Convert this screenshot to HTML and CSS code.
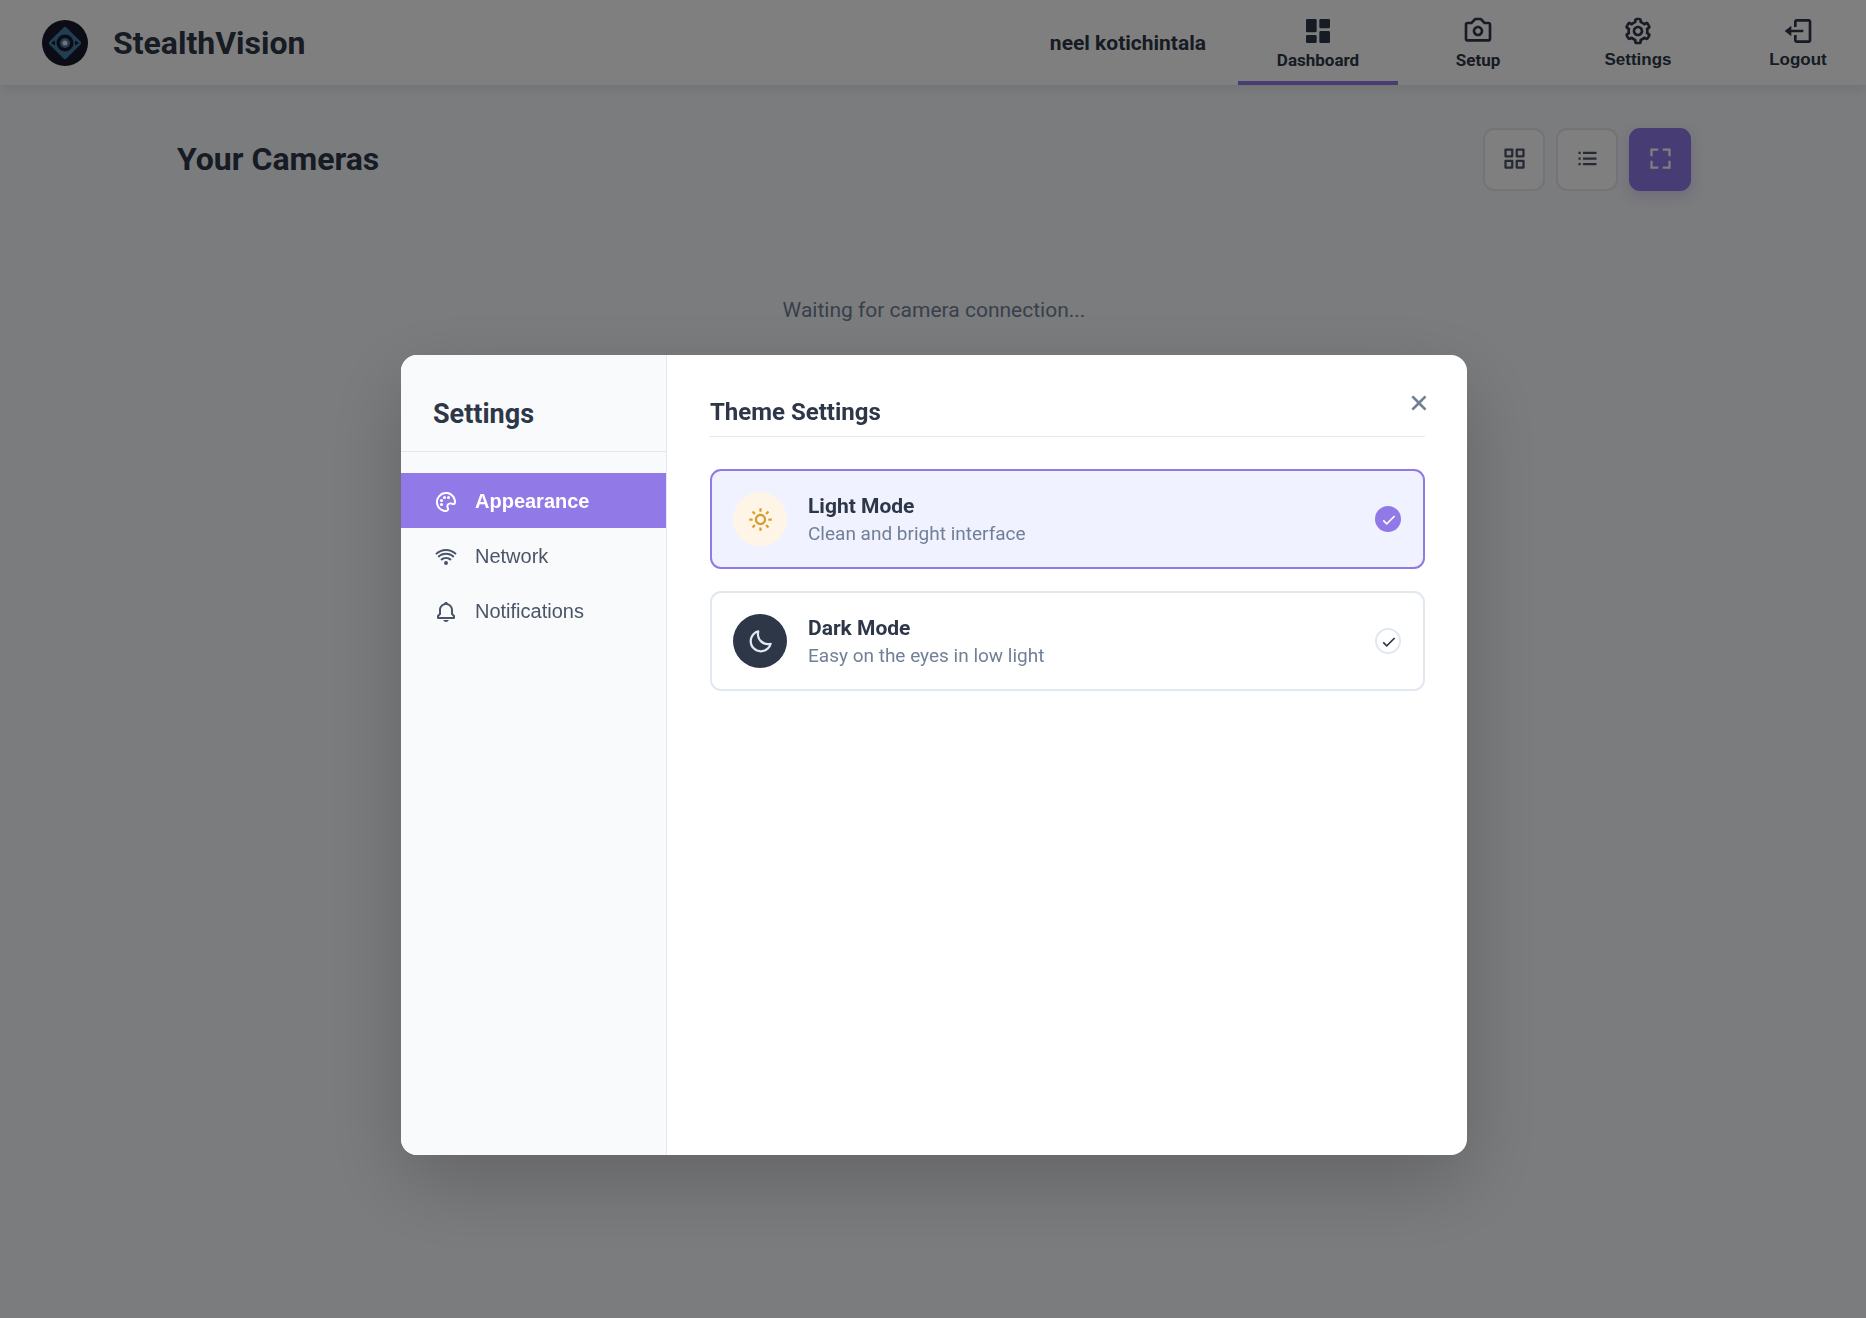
FILE: index.html
```html
<!DOCTYPE html>
<html lang="en">
<head>
<meta charset="utf-8">
<meta name="viewport" content="width=device-width, initial-scale=1">
<title>StealthVision</title>
<link rel="stylesheet" href="styles.css">
</head>
<body>
<header class="navbar">
  <a class="brand" href="#">
    <svg class="brand-logo" viewBox="0 0 46 46" aria-hidden="true">
      <circle cx="23" cy="23" r="23" fill="#16192c"/>
      <rect x="11" y="11" width="24" height="24" rx="2" fill="#447ca6" transform="rotate(45 23 23)"/>
      <circle cx="23" cy="23" r="8.500" fill="#16192c"/>
      <circle cx="23" cy="23" r="5" fill="#447ca6"/>
      <circle cx="23" cy="23" r="2.500" fill="#e6e6e0"/>
      <path d="M9 23l4-2.500v5zM37 23l-4-2.500v5z" fill="#16192c"/>
    </svg>
    <span class="brand-name">StealthVision</span>
  </a>
  <nav class="nav-menu" aria-label="Main">
    <span class="user-name">neel kotichintala</span>
    <a class="nav-item active" href="#" aria-current="page">
      <svg class="icon nav-icon" viewBox="0 0 24 24"><path d="M4 13h6a1 1 0 0 0 1-1V4a1 1 0 0 0-1-1H4a1 1 0 0 0-1 1v8a1 1 0 0 0 1 1zm-1 7a1 1 0 0 0 1 1h6a1 1 0 0 0 1-1v-4a1 1 0 0 0-1-1H4a1 1 0 0 0-1 1v4zm10 0a1 1 0 0 0 1 1h6a1 1 0 0 0 1-1v-7a1 1 0 0 0-1-1h-6a1 1 0 0 0-1 1v7zm1-10h6a1 1 0 0 0 1-1V4a1 1 0 0 0-1-1h-6a1 1 0 0 0-1 1v5a1 1 0 0 0 1 1z"/></svg>
      <span>Dashboard</span>
    </a>
    <a class="nav-item" href="#">
      <svg class="icon nav-icon" viewBox="0 0 24 24"><path fill-rule="evenodd" d="M12 8c-2.168 0-4 1.832-4 4s1.832 4 4 4 4-1.832 4-4-1.832-4-4-4zm0 6c-1.065 0-2-.935-2-2s.935-2 2-2 2 .935 2 2-.935 2-2 2z M20 5h-2.586l-2.707-2.707A.996.996 0 0 0 14 2h-4a.996.996 0 0 0-.707.293L6.586 5H4c-1.103 0-2 .897-2 2v11c0 1.103.897 2 2 2h16c1.103 0 2-.897 2-2V7c0-1.103-.897-2-2-2zM4 18V7h3c.266 0 .52-.105.707-.293L10.414 4h3.172l2.707 2.707A.996.996 0 0 0 17 7h3l.002 11H4z"/></svg>
      <span>Setup</span>
    </a>
    <button class="nav-item" type="button">
      <svg class="icon nav-icon" viewBox="0 0 24 24"><path d="M12 16c2.206 0 4-1.794 4-4s-1.794-4-4-4-4 1.794-4 4 1.794 4 4 4zm0-6c1.084 0 2 .916 2 2s-.916 2-2 2-2-.916-2-2 .916-2 2-2z"/><path d="m2.845 16.136 1 1.730c.531.917 1.809 1.261 2.730.730l.529-.306A8.100 8.100 0 0 0 9 19.402V20c0 1.103.897 2 2 2h2c1.103 0 2-.897 2-2v-.598a8.132 8.132 0 0 0 1.896-1.111l.529.306c.923.530 2.198.188 2.731-.731l.999-1.729a2.001 2.001 0 0 0-.731-2.732l-.505-.292a7.718 7.718 0 0 0 0-2.224l.505-.292a2.002 2.002 0 0 0 .731-2.732l-.999-1.729c-.531-.920-1.808-1.265-2.731-.732l-.529.306A8.100 8.100 0 0 0 15 4.598V4c0-1.103-.897-2-2-2h-2c-1.103 0-2 .897-2 2v.598a8.132 8.132 0 0 0-1.896 1.111l-.529-.306c-.924-.531-2.200-.187-2.731.732l-.999 1.729a2.001 2.001 0 0 0 .731 2.732l.505.292a7.683 7.683 0 0 0 0 2.223l-.505.292a2.003 2.003 0 0 0-.731 2.733zm3.326-2.758A5.703 5.703 0 0 1 6 12c0-.462.058-.926.170-1.378a.999.999 0 0 0-.470-1.108l-1.123-.650.998-1.729 1.145.662a.997.997 0 0 0 1.188-.142 6.071 6.071 0 0 1 2.384-1.399A1 1 0 0 0 11 5.300V4h2v1.300a1 1 0 0 0 .708.956 6.083 6.083 0 0 1 2.384 1.399.999.999 0 0 0 1.188.142l1.144-.661 1 1.729-1.124.649a1 1 0 0 0-.470 1.108c.112.452.170.916.170 1.378 0 .461-.058.925-.171 1.378a1 1 0 0 0 .471 1.108l1.123.649-.998 1.729-1.145-.661a.996.996 0 0 0-1.188.142 6.071 6.071 0 0 1-2.384 1.399A1 1 0 0 0 13 18.700l.002 1.300H11v-1.300a1 1 0 0 0-.708-.956 6.083 6.083 0 0 1-2.384-1.399.992.992 0 0 0-1.188-.141l-1.144.662-1-1.729 1.124-.651a1 1 0 0 0 .471-1.108z"/></svg>
      <span>Settings</span>
    </button>
    <button class="nav-item" type="button">
      <svg class="icon nav-icon" viewBox="0 0 24 24"><path d="M16 13v-2H7V8l-5 4 5 4v-3z"/><path d="M20 3h-9c-1.103 0-2 .897-2 2v4h2V5h9v14h-9v-4H9v4c0 1.103.897 2 2 2h9c1.103 0 2-.897 2-2V5c0-1.103-.897-2-2-2z"/></svg>
      <span>Logout</span>
    </button>
  </nav>
</header>

<main class="page">
  <div class="page-header">
    <h1 class="page-title">Your Cameras</h1>
    <div class="view-controls">
      <button class="view-btn" type="button" aria-label="Grid view">
        <svg class="icon view-icon" viewBox="0 0 24 24"><path fill-rule="evenodd" d="M4 3h6a1 1 0 0 1 1 1v6a1 1 0 0 1-1 1H4a1 1 0 0 1-1-1V4a1 1 0 0 1 1-1zm1 2v4h4V5zM14 3h6a1 1 0 0 1 1 1v6a1 1 0 0 1-1 1h-6a1 1 0 0 1-1-1V4a1 1 0 0 1 1-1zm1 2v4h4V5zM4 13h6a1 1 0 0 1 1 1v6a1 1 0 0 1-1 1H4a1 1 0 0 1-1-1v-6a1 1 0 0 1 1-1zm1 2v4h4v-4zM14 13h6a1 1 0 0 1 1 1v6a1 1 0 0 1-1 1h-6a1 1 0 0 1-1-1v-6a1 1 0 0 1 1-1zm1 2v4h4v-4z"/></svg>
      </button>
      <button class="view-btn" type="button" aria-label="List view">
        <svg class="icon view-icon" viewBox="0 0 24 24"><path d="M4 6h2v2H4zm0 5h2v2H4zm0 5h2v2H4zM8 6h12v2H8zm0 5h12v2H8zm0 5h12v2H8z"/></svg>
      </button>
      <button class="view-btn active" type="button" aria-label="Fullscreen view">
        <svg class="icon view-icon" viewBox="0 0 24 24"><path d="M5 5h5V3H3v7h2zm5 14H5v-5H3v7h7zm11-5h-2v5h-5v2h7zm-2-4h2V3h-7v2h5z"/></svg>
      </button>
    </div>
  </div>
  <p class="status">Waiting for camera connection...</p>
</main>

<div class="overlay">
  <section class="modal" role="dialog" aria-modal="true" aria-labelledby="settings-title">
    <aside class="sidebar">
      <h2 class="sidebar-title" id="settings-title">Settings</h2>
      <nav class="sidebar-menu" aria-label="Settings sections">
        <button class="sidebar-item active" type="button">
          <svg class="icon sidebar-icon" viewBox="0 0 24 24"><path d="M13.400 2.096a10.080 10.080 0 0 0-8.937 3.331A10.054 10.054 0 0 0 2.096 13.400c.530 3.894 3.458 7.207 7.285 8.246a9.982 9.982 0 0 0 2.618.354l.142-.001a3.001 3.001 0 0 0 2.516-1.426 2.989 2.989 0 0 0 .153-2.879l-.199-.416a1.919 1.919 0 0 1 .094-1.912 2.004 2.004 0 0 1 2.576-.755l.412.197c.412.198.850.299 1.301.299A3.022 3.022 0 0 0 22 12.140a9.935 9.935 0 0 0-.353-2.760c-1.040-3.826-4.353-6.754-8.247-7.284zm5.158 10.909-.412-.197c-1.828-.878-4.070-.198-5.135 1.494-.738 1.176-.813 2.576-.204 3.842l.199.416a.983.983 0 0 1-.051.961.992.992 0 0 1-.844.479h-.112a8.061 8.061 0 0 1-2.095-.283c-3.063-.831-5.403-3.479-5.826-6.586-.321-2.355.352-4.623 1.893-6.389a8.002 8.002 0 0 1 7.160-2.664c3.107.423 5.755 2.764 6.586 5.826.198.730.293 1.474.282 2.207-.012.807-.845 1.183-1.441.894z"/><circle cx="7.500" cy="14.500" r="1.500"/><circle cx="7.500" cy="10.500" r="1.500"/><circle cx="10.500" cy="7.500" r="1.500"/><circle cx="14.500" cy="7.500" r="1.500"/></svg>
          <span>Appearance</span>
        </button>
        <button class="sidebar-item" type="button">
          <svg class="icon sidebar-icon" viewBox="0 0 24 24"><path d="M12 6c3.537 0 6.837 1.353 9.293 3.809l1.414-1.414C19.874 5.561 16.071 4 12 4c-4.071.001-7.874 1.561-10.707 4.395l1.414 1.414C5.163 7.353 8.463 6 12 6zm5.671 8.307c-3.074-3.074-8.268-3.074-11.342 0l1.414 1.414c2.307-2.307 6.207-2.307 8.514 0l1.414-1.414z"/><path d="M20.437 11.293c-4.572-4.574-12.301-4.574-16.873 0l1.414 1.414c3.807-3.807 10.238-3.807 14.045 0l1.414-1.414z"/><circle cx="12" cy="18" r="2"/></svg>
          <span>Network</span>
        </button>
        <button class="sidebar-item" type="button">
          <svg class="icon sidebar-icon" viewBox="0 0 24 24"><path d="M19 13.586V10c0-3.217-2.185-5.927-5.145-6.742C13.562 2.520 12.846 2 12 2s-1.562.520-1.855 1.258C7.185 4.074 5 6.783 5 10v3.586l-1.707 1.707A.996.996 0 0 0 3 16v2a1 1 0 0 0 1 1h16a1 1 0 0 0 1-1v-2a.996.996 0 0 0-.293-.707L19 13.586zM19 17H5v-.586l1.707-1.707A.996.996 0 0 0 7 14v-4c0-2.757 2.243-5 5-5s5 2.243 5 5v4c0 .266.105.520.293.707L19 16.414V17zm-7 5a2.980 2.980 0 0 0 2.818-2H9.182A2.980 2.980 0 0 0 12 22z"/></svg>
          <span>Notifications</span>
        </button>
      </nav>
    </aside>
    <div class="content">
      <button class="close-btn" type="button" aria-label="Close">
        <svg class="icon close-icon" viewBox="0 0 24 24"><path d="m16.192 6.344-4.243 4.242-4.242-4.242-1.414 1.414L10.535 12l-4.242 4.242 1.414 1.414 4.242-4.242 4.243 4.242 1.414-1.414L13.364 12l4.242-4.242z"/></svg>
      </button>
      <h3 class="content-title">Theme Settings</h3>
      <div class="options" role="radiogroup" aria-label="Theme">
        <label class="option selected" for="theme-light">
          <span class="option-badge light">
            <svg class="icon badge-icon" viewBox="0 0 24 24"><path d="M6.993 12c0 2.761 2.246 5.007 5.007 5.007s5.007-2.246 5.007-5.007S14.761 6.993 12 6.993 6.993 9.239 6.993 12zM12 8.993c1.658 0 3.007 1.349 3.007 3.007S13.658 15.007 12 15.007 8.993 13.658 8.993 12 10.342 8.993 12 8.993zM10.998 19h2v3h-2zm0-17h2v3h-2zm-9 9h3v2h-3zm17 0h3v2h-3zM4.219 18.363l2.120-2.122 1.415 1.414-2.120 2.122zM16.240 6.344l2.122-2.122 1.414 1.414-2.122 2.122zM6.342 7.759 4.220 5.637l1.415-1.414 2.120 2.122zm13.434 10.605-1.414 1.414-2.122-2.122 1.414-1.414z"/></svg>
          </span>
          <span class="option-text">
            <span class="option-name">Light Mode</span>
            <span class="option-desc">Clean and bright interface</span>
          </span>
          <span class="option-check">
            <input class="option-radio" id="theme-light" type="radio" name="theme" value="light" checked>
            <svg class="icon check-icon" viewBox="0 0 24 24"><path d="m10 15.586-3.293-3.293-1.414 1.414L10 18.414l9.707-9.707-1.414-1.414z"/></svg>
          </span>
        </label>
        <label class="option" for="theme-dark">
          <span class="option-badge dark">
            <svg class="icon badge-icon" viewBox="0 0 24 24"><path d="M20.742 13.045a8.088 8.088 0 0 1-2.077.271c-2.135 0-4.140-.830-5.646-2.336a8.025 8.025 0 0 1-2.064-7.723A1 1 0 0 0 9.730 2.034a10.014 10.014 0 0 0-4.489 2.582c-3.898 3.898-3.898 10.243 0 14.143a9.937 9.937 0 0 0 7.072 2.930 9.930 9.930 0 0 0 7.070-2.929 10.007 10.007 0 0 0 2.583-4.491 1.001 1.001 0 0 0-1.224-1.224zm-2.772 4.301a7.947 7.947 0 0 1-5.656 2.343 7.953 7.953 0 0 1-5.658-2.344c-3.118-3.119-3.118-8.195 0-11.314a7.923 7.923 0 0 1 2.060-1.483 10.027 10.027 0 0 0 2.890 7.848 9.972 9.972 0 0 0 7.848 2.891 8.036 8.036 0 0 1-1.484 2.059z"/></svg>
          </span>
          <span class="option-text">
            <span class="option-name">Dark Mode</span>
            <span class="option-desc">Easy on the eyes in low light</span>
          </span>
          <span class="option-check">
            <input class="option-radio" id="theme-dark" type="radio" name="theme" value="dark">
            <svg class="icon check-icon" viewBox="0 0 24 24"><path d="m10 15.586-3.293-3.293-1.414 1.414L10 18.414l9.707-9.707-1.414-1.414z"/></svg>
          </span>
        </label>
      </div>
    </div>
  </section>
</div>
</body>
</html>
```
FILE: styles.css
```css
:root {
  --ink: #2d3748;
  --text: #4a5568;
  --muted: #718096;
  --line: #e2e8f0;
  --accent: #9179e8;
  --ui: Roboto, sans-serif;
  --control: "Liberation Sans", Arial, sans-serif;
}

* { box-sizing: border-box; }

body {
  margin: 0;
  min-height: 100vh;
  overflow: hidden;
  background: #f7f9fc;
  color: var(--ink);
  font-family: var(--ui);
}

h1, h2, h3, p { margin: 0; }

button {
  border: 0;
  padding: 0;
  background: none;
  color: inherit;
  font-family: var(--control);
  cursor: pointer;
}

a { color: inherit; text-decoration: none; }

.icon { display: block; flex: none; fill: currentColor; }

/* Top bar */
.navbar {
  display: flex;
  justify-content: space-between;
  height: 85px;
  padding-left: 42px;
  background: #fff;
  box-shadow: 0 3px 13px rgba(0, 0, 0, 0.1);
}

.brand { display: flex; align-items: center; gap: 25px; }
.brand-logo { width: 46px; height: 46px; }
.brand-name { font-size: 32px; font-weight: 700; line-height: 40px; }

.nav-menu { display: flex; align-items: stretch; margin-right: -12px; }
.user-name { align-self: center; margin-right: 32px; font-size: 21px; font-weight: 700; }

.nav-item {
  display: flex;
  flex-direction: column;
  align-items: center;
  width: 160px;
  padding-top: 15px;
  border-bottom: 4px solid transparent;
  font-size: 17px;
  font-weight: 700;
  line-height: 26px;
}

.nav-item.active { border-bottom-color: var(--accent); }
.nav-icon { width: 32px; height: 32px; }

/* Camera page */
.page { width: 1516px; max-width: 90%; margin: 0 auto; padding: 43px 0 0 2px; }
.page-header { display: flex; align-items: center; justify-content: space-between; }
.page-title { padding-bottom: 2px; font-size: 32px; font-weight: 700; line-height: 40px; }
.view-controls { display: flex; gap: 11px; }

.view-btn {
  display: grid;
  place-items: center;
  width: 62px;
  height: 63px;
  padding-bottom: 2px;
  border: 2px solid #e6e6f0;
  border-radius: 11px;
  background: #fff;
  color: var(--text);
}

.view-btn.active {
  border-color: var(--accent);
  background: var(--accent);
  color: #fff;
  box-shadow: 0 5px 16px rgba(145, 121, 232, 0.3);
}

.view-icon { width: 27px; height: 27px; }
.status { margin-top: 104px; color: var(--muted); font-size: 21px; line-height: 30px; text-align: center; }

/* Settings dialog */
.overlay {
  position: fixed;
  inset: 0;
  display: flex;
  align-items: flex-start;
  justify-content: center;
  padding: 355px 0 0 2px;
  background: rgba(0, 0, 0, 0.5);
}

.modal {
  display: flex;
  width: 1066px;
  max-width: 90%;
  min-height: 800px;
  overflow: hidden;
  border-radius: 16px;
  background: #fff;
  box-shadow: 0 27px 80px rgba(0, 0, 0, 0.2);
}

.sidebar { width: 266px; flex: none; border-right: 1px solid var(--line); background: #f9fafc; }

.sidebar-title {
  padding: 43px 32px 21px;
  border-bottom: 1px solid var(--line);
  font-size: 27px;
  font-weight: 700;
  line-height: 32px;
}

.sidebar-menu { display: flex; flex-direction: column; padding-top: 21px; }

.sidebar-item {
  display: flex;
  align-items: center;
  gap: 17px;
  height: 55px;
  padding: 2px 33px 0;
  color: var(--text);
  font-size: 20px;
}

.sidebar-item.active { background: var(--accent); color: #fff; font-weight: 700; }
.sidebar-icon { width: 24px; height: 24px; }

.content { position: relative; flex: 1; padding: 43px 42px 43px 43px; }

.close-btn {
  position: absolute;
  top: 32px;
  right: 32px;
  display: grid;
  place-items: center;
  color: var(--muted);
}

.close-icon { width: 32px; height: 32px; }

.content-title {
  padding-bottom: 10px;
  border-bottom: 1px solid var(--line);
  font-size: 24px;
  font-weight: 700;
  line-height: 28px;
}

.options { display: flex; flex-direction: column; gap: 22px; margin-top: 32px; }

.option {
  display: flex;
  align-items: center;
  height: 100px;
  padding: 0 22px 0 21px;
  border: 2px solid var(--line);
  border-radius: 11px;
  cursor: pointer;
}

.option.selected { border-color: var(--accent); background: #f0f2ff; }

.option-badge {
  display: grid;
  place-items: center;
  width: 54px;
  height: 54px;
  border-radius: 50%;
}

.option-badge.light { background: #fef5e7; color: #d69e2e; }
.option-badge.dark { background: var(--ink); color: var(--line); }
.badge-icon { width: 27px; height: 27px; }

.option-text { display: flex; flex: 1; flex-direction: column; margin-left: 21px; padding-top: 1px; }
.option-name { font-size: 21px; font-weight: 700; line-height: 28px; }
.option-desc { color: var(--muted); font-size: 19px; line-height: 28px; }

.option-check { display: grid; place-items: center; color: var(--ink); }
.option.selected .option-check { color: #fff; }

.option-radio {
  grid-area: 1 / 1;
  appearance: none;
  width: 26px;
  height: 26px;
  margin: 0;
  border: 2px solid var(--line);
  border-radius: 50%;
}

.option-radio:checked { border-color: var(--accent); background: var(--accent); }
.check-icon { grid-area: 1 / 1; width: 21px; height: 21px; pointer-events: none; }
```
